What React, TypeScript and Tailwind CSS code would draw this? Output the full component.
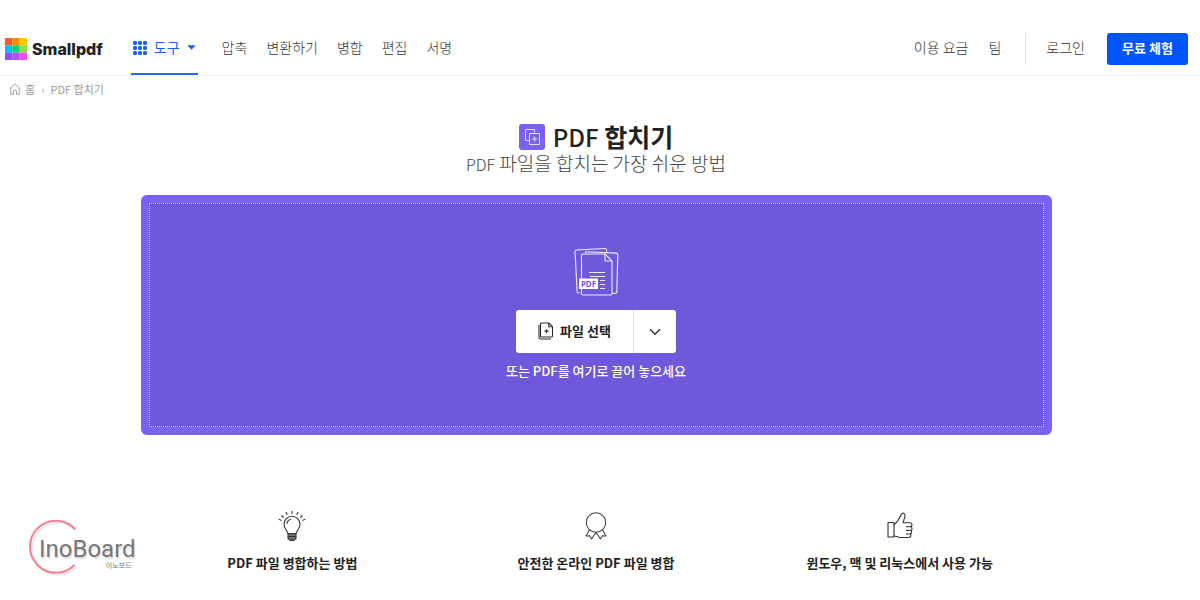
import * as React from "react";

const links = ["압축", "변환하기", "병합", "편집", "서명"];

const logoColors = [
  "#ff5a1f", "#ff8a00", "#ffc800",
  "#00bdf5", "#00d36b", "#8ee04a",
  "#8a4dff", "#b44dff", "#f04df5",
];

function LogoMark() {
  return (
    <svg width="22" height="22" viewBox="0 0 21 21" aria-hidden="true">
      {logoColors.map((color, index) => (
        <rect key={index} x={(index % 3) * 7} y={Math.floor(index / 3) * 7} width="7" height="7" fill={color} />
      ))}
    </svg>
  );
}

function GridIcon() {
  return (
    <svg width="14" height="14" viewBox="0 0 14 14" fill="currentColor" aria-hidden="true">
      {[0, 5, 10].map((y) =>
        [0, 5, 10].map((x) => <rect key={`${x}-${y}`} x={x + 0.1} y={y + 0.1} width="3.8" height="3.8" rx="1.2" />),
      )}
    </svg>
  );
}

function HomeIcon() {
  return (
    <svg width="12" height="12" viewBox="0 0 12 12" fill="none" stroke="currentColor" strokeWidth="0.9" strokeLinejoin="round" aria-hidden="true">
      <path d="M.8 5.8 6 .8l5.2 5M1.8 5v6.4h2.7V8.5a1.5 1.5 0 0 1 3 0v2.9h2.7V5" />
    </svg>
  );
}

function MergeIcon() {
  return (
    <svg width="26" height="26" viewBox="0 0 26 26" fill="none" stroke="#e4defc" strokeWidth="1" aria-hidden="true">
      <rect width="26" height="26" rx="3" fill="#7961f2" stroke="none" />
      <path d="M10.5 16.5h-4v-11h9v3" />
      <path d="M10.5 9.5h10v11h-10z" />
      <path d="M15.5 12.6v4.800M13.100 15h4.800" strokeWidth="1.2" />
    </svg>
  );
}

function PdfStackIcon() {
  return (
    <svg width="46" height="50" viewBox="0 0 46 50" fill="none" stroke="#eeeafd" strokeWidth="1.1" strokeLinejoin="round" aria-hidden="true">
      <path d="M7 46H5.400a1.300 1.300 0 0 1-1.300-1.200L2 4.200A1.300 1.300 0 0 1 3.200 3L32 1.500a1.500 1.500 0 0 1 1.600 1.400V5" />
      <path d="M12.500 6.500V4.800L43.500 6.100a1.400 1.400 0 0 1 1.300 1.500l-1 37.500a1.400 1.400 0 0 1-1.500 1.300H39" />
      <path d="M8.500 34V8.500A1.500 1.500 0 0 1 10 7h22l7 7v32.500a1.500 1.500 0 0 1-1.500 1.500H10a1.500 1.500 0 0 1-1.500-1.500V42" />
      <path d="M32 7v7h7" />
      <path d="M16 25.500h16M17 29.500h15M27 33.500h5M27 37.500h5M27 41.500h5" />
      <rect x="6" y="31.500" width="19" height="10.500" fill="#fff" stroke="none" />
      <text x="15.500" y="39.500" textAnchor="middle" fontFamily="Noto Sans, sans-serif" fontWeight="700" fontSize="8" fill="#6f59da" stroke="none">
        PDF
      </text>
    </svg>
  );
}

function FilePlusIcon() {
  return (
    <svg width="16" height="18" viewBox="0 0 16 18" fill="none" stroke="#2b2b2b" strokeWidth="1.1" strokeLinejoin="round" aria-hidden="true">
      <path d="M3.500 1h7.300l3.700 3.700V14a1 1 0 0 1-1 1h-10a1 1 0 0 1-1-1V2a1 1 0 0 1 1-1z" />
      <path d="M10.800 1v3.700h3.700" />
      <path d="M1 3v12.500A1.500 1.500 0 0 0 2.500 17H13" />
      <path d="M8.500 7.200v4M6.500 9.200h4" strokeWidth="1.2" />
    </svg>
  );
}

function BulbIcon() {
  return (
    <svg width="28" height="32" viewBox="0 0 28 32" fill="none" stroke="#333" strokeWidth="1.1" strokeLinejoin="round" aria-hidden="true">
      <path d="M10 23.800c0-3-4-4.700-4-9.600a8 8 0 0 1 16 0c0 4.900-4 6.600-4 9.600z" />
      <path d="M9 14a5 5 0 0 1 4-4.700" />
      <rect x="10" y="23.800" width="8" height="5.400" rx="1" fill="#777" />
      <path d="M10 26.500h8M11.500 30.500h5" />
      <path d="M14 1v3M8 2l1.300 2.800M20 2l-1.300 2.800M3.500 5.500l2.200 2M24.500 5.500l-2.200 2M.8 9.300l2.700 1.100M27.200 9.300l-2.700 1.100" />
    </svg>
  );
}

function RibbonIcon() {
  return (
    <svg width="22" height="28" viewBox="0 0 22 28" fill="none" stroke="#444" strokeWidth="1.1" strokeLinejoin="round" aria-hidden="true">
      <circle cx="11" cy="10.500" r="9.700" />
      <path d="M4.500 17.800 1 24l3.800-.3L6.600 27 11 20.200M17.500 17.800 21 24l-3.800-.3-1.800 3.300L11 20.200" />
    </svg>
  );
}

function ThumbIcon() {
  return (
    <svg width="26" height="28" viewBox="0 0 26 28" fill="none" stroke="#333" strokeWidth="1.1" strokeLinejoin="round" strokeLinecap="round" aria-hidden="true">
      <path d="M1 10.500h6v14.500H1z" />
      <path d="M7 12.500c3-1.800 4.800-4.600 6.800-9.200.8-1.900 1.700-2.500 2.800-2.100 1.700.6 1.500 2.800 1 4.400L16 10.800h6.800c1.500 0 2.200.9 2.200 2s-.9 2-2.200 2h-3.500" />
      <path d="M24 14.600c.8.500 1 1.100 1 1.800 0 1.200-.9 2.100-2 2.100h-3.700M23.800 18.400c.5.400.8.900.8 1.600 0 1.200-.8 2-1.900 2h-3.400M23.300 22c.4.400.5.800.5 1.300 0 1.300-.8 2.200-2.200 2.200H12.800c-2 0-3.300-1.500-5.800-1.500" />
    </svg>
  );
}

const features = [
  { icon: <BulbIcon />, title: "PDF 파일 병합하는 방법" },
  { icon: <RibbonIcon />, title: "안전한 온라인 PDF 파일 병합" },
  { icon: <ThumbIcon />, title: "윈도우, 맥 및 리눅스에서 사용 가능" },
];

function Header() {
  return (
    <header className="flex items-stretch justify-between border-b border-[#f0f0f0] pt-[22px] pr-3 pl-[5px] text-sm font-light text-[#333]">
      <nav className="flex items-center">
        <a href="#" className="flex items-center gap-[5px] font-['Inter',sans-serif] text-base leading-5 font-extrabold text-[#222]">
          <LogoMark />
          Smallpdf
        </a>
        <button
          type="button"
          className="ml-7 flex h-[53px] items-center gap-[7px] border-b-2 border-[#2b66d9] px-0.5 font-normal text-[#1660f5]"
        >
          <GridIcon />
          <span className="pb-0.5">도구</span>
          <svg width="9" height="5" viewBox="0 0 9 5" fill="currentColor" aria-hidden="true">
            <path d="M.3.200h8.400L4.500 4.800z" />
          </svg>
        </button>
        <div className="ml-6 flex gap-[19px] pb-[3px]">
          {links.map((label) => (
            <a key={label} href="#">
              {label}
            </a>
          ))}
        </div>
      </nav>
      <div className="flex items-center">
        <a href="#" className="pb-[3px]">이용 요금</a>
        <a href="#" className="ml-5 pb-[3px]">팀</a>
        <span className="mr-5 ml-6 h-8 border-l border-[#ddd]" />
        <a href="#" className="pb-[3px]">로그인</a>
        <button type="button" className="ml-[22px] h-8 w-[81px] rounded-[3px] bg-[#0055ff] text-[13px] font-bold text-white">
          무료 체험
        </button>
      </div>
    </header>
  );
}

function DropZone() {
  return (
    <section className="mt-[21px] w-full max-w-[911px] rounded-md bg-[#7961f2] p-2">
      <div className="flex flex-col items-center border border-dotted border-[#cfc7f7] bg-[#6f59da] pt-[43px] pb-[45px]">
        <PdfStackIcon />
        <div className="mt-[13px] flex h-[43px] rounded-[3px] bg-white text-[#222]">
          <button type="button" className="flex w-[117px] items-center justify-center gap-1.5 pb-0.5 text-[13px] font-bold">
            <FilePlusIcon />
            파일 선택
          </button>
          <button type="button" aria-label="더 보기" className="flex w-[43px] items-center justify-center border-l border-[#ddd]">
            <svg width="12" height="8" viewBox="0 0 12 8" fill="none" stroke="#333" strokeWidth="1.500" aria-hidden="true">
              <path d="m1 1.200 5 5 5-5" />
            </svg>
          </button>
        </div>
        <p className="mt-2 text-[13px] leading-5 font-medium text-white">또는 PDF를 여기로 끌어 놓으세요</p>
      </div>
    </section>
  );
}

function Watermark() {
  return (
    <div className="absolute top-[519px] left-[27px] text-[#777]">
      <svg width="56" height="58" viewBox="0 0 56 58" fill="none" aria-hidden="true">
        <path d="M48 10A26 26 0 1 0 47.500 46" stroke="#e8e8e8" strokeWidth="2" transform="translate(2 2)" />
        <path d="M48 10A26 26 0 1 0 47.500 46" stroke="#f57f8e" strokeWidth="2" />
      </svg>
      <div className="absolute top-[18px] left-3 flex flex-col items-end">
        <span className="font-['Roboto',sans-serif] text-2xl leading-6 [text-shadow:1px_2px_1px_#ddd]">InoBoard</span>
        <span className="pr-1 text-[7px] leading-2 whitespace-nowrap">이노보드</span>
      </div>
    </div>
  );
}

export default function App() {
  return (
    <div className="relative min-h-screen bg-white font-['Noto_Sans_CJK_KR','Liberation_Sans',sans-serif]">
      <Header />
      <nav aria-label="breadcrumb" className="flex items-center gap-1 px-[9px] pt-[3px] text-[11px] leading-5 text-[#999]">
        <a href="#" className="flex items-center gap-1">
          <HomeIcon />홈
        </a>
        <span className="px-0.5">›</span>
        <a href="#">PDF 합치기</a>
      </nav>

      <main className="flex flex-col items-center pt-[21px] pr-2">
        <h1 className="flex items-center gap-2 text-[25px] leading-8 font-bold text-[#222]">
          <MergeIcon />
          <span>
            <span className="text-2xl leading-8 font-medium">PDF</span> 합치기
          </span>
        </h1>
        <p className="text-[19px] leading-5 font-light text-[#444]">
          <span className="text-base leading-5">PDF</span> 파일을 합치는 가장 쉬운 방법
        </p>
        <DropZone />

        <div className="mt-[75px] grid w-full max-w-[911px] grid-cols-3">
          {features.map((feature) => (
            <div key={feature.title} className="flex flex-col items-center">
              <div className="flex h-8 items-center">{feature.icon}</div>
              <h2 className="mt-[11px] text-[13px] leading-5 font-bold text-[#222]">{feature.title}</h2>
            </div>
          ))}
        </div>
      </main>

      <Watermark />
    </div>
  );
}
